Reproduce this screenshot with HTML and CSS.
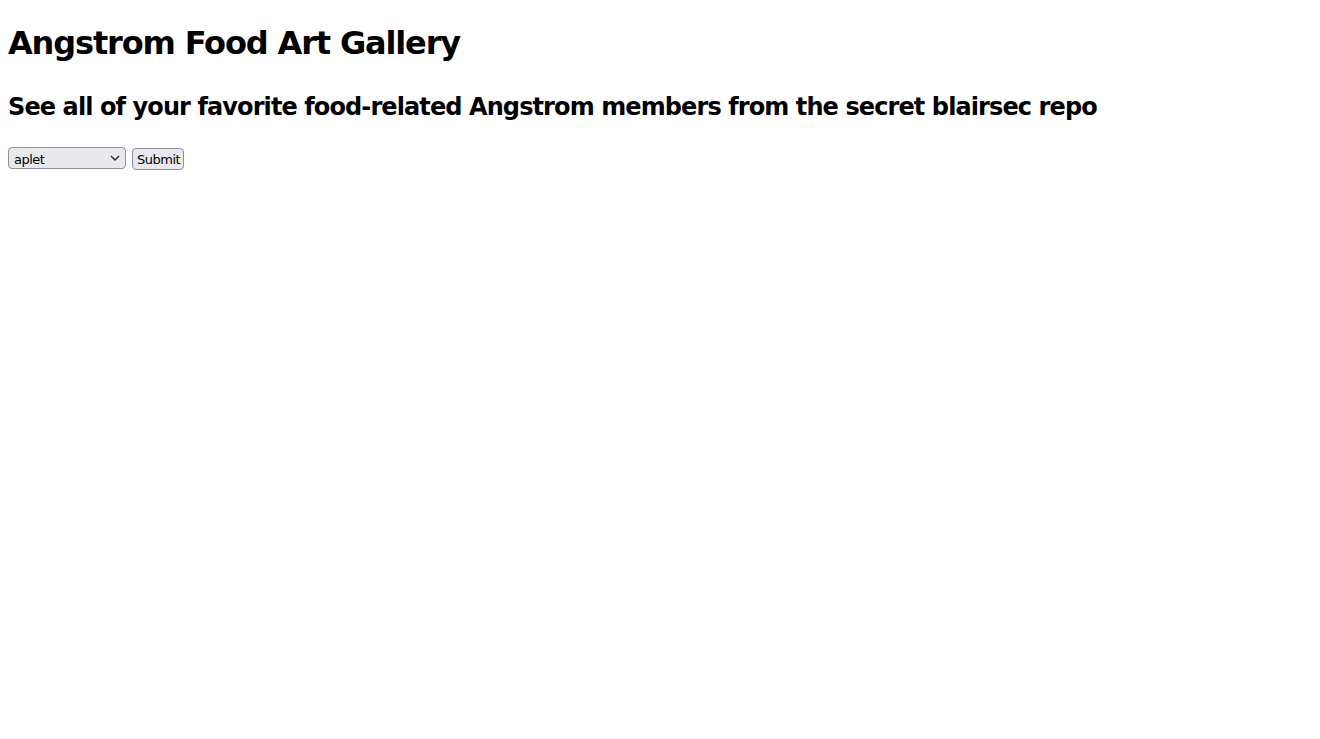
FILE: index.html
```html
<!DOCTYPE html>
<html>
<head>
<meta charset="utf-8">
<title>Angstrom Food Art Gallery</title>
<link rel="stylesheet" href="styles.css">
</head>
<body>
<h1 class="title">Angstrom Food Art Gallery</h1>
<h2 class="subtitle">See all of your favorite food-related Angstrom members from the secret blairsec repo</h2>
<form class="picker">
<span class="select-wrap">
<select class="member" name="member">
<option>aplet</option>
</select>
<svg class="chevron" width="10" height="6" viewBox="0 0 10 6"><path d="M1 1 L5 5 L9 1" fill="none" stroke="#222" stroke-width="1.3"/></svg>
</span>
<button class="submit" type="submit">Submit</button>
</form>
</body>
</html>
```
FILE: styles.css
```css
body {
  margin: 8px;
  font-family: "DejaVu Sans", "Noto Sans CJK JP", sans-serif;
  line-height: 1.5;
  color: #000;
  background: #fff;
}
.title {
  font-size: 32px;
  font-weight: bold;
  margin: 11.44px 0 21.44px;
  letter-spacing: -1.15px;
}
.subtitle {
  font-size: 24px;
  font-weight: bold;
  margin: 19.92px 0 21.92px;
  letter-spacing: -0.9px;
}
.picker {
  display: flex;
  align-items: center;
  gap: 6px;
}
.select-wrap {
  position: relative;
  display: inline-block;
}
.member, .submit {
  font-family: "DejaVu Sans", sans-serif;
  font-size: 13px;
  letter-spacing: -0.5px;
  color: #000;
  background: #e9e9ed;
  border: 1px solid #8f8f9d;
  border-radius: 4px;
  height: 22px;
  box-sizing: border-box;
  margin: 0;
}
.member {
  -webkit-appearance: none;
  appearance: none;
  width: 118px;
  padding: 2px 20px 0 5px;
}
.chevron {
  position: absolute;
  right: 6px;
  top: 8px;
  pointer-events: none;
}
.submit {
  padding: 2px 4px 0;
  width: 52px;
}
```
